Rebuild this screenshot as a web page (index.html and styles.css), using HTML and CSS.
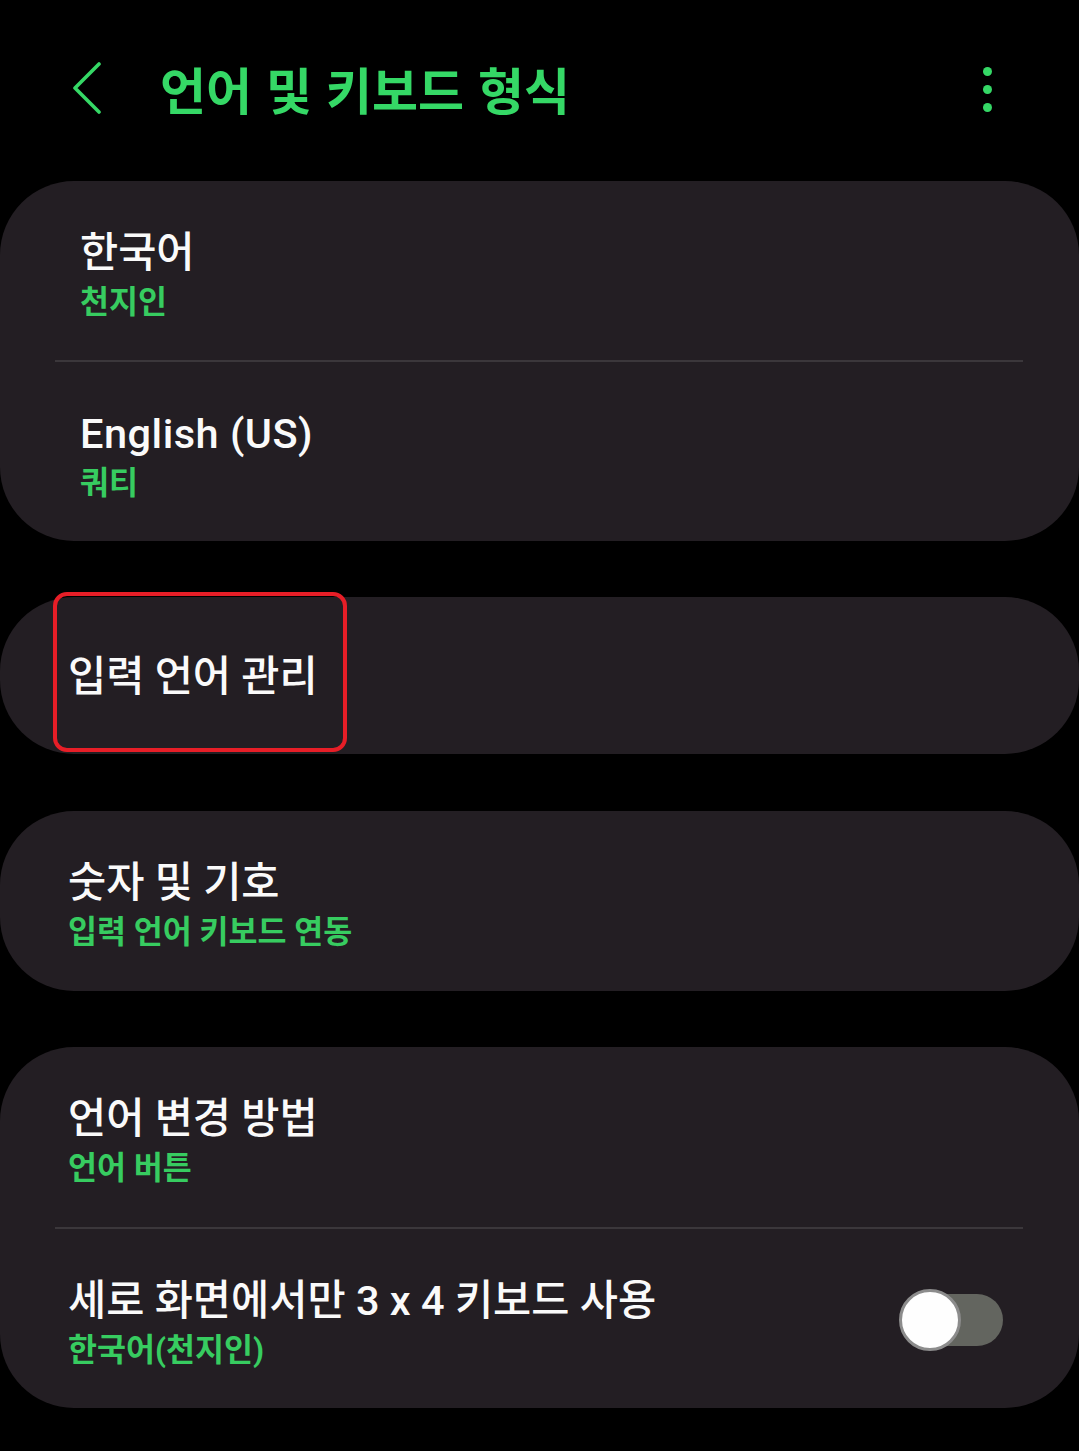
FILE: index.html
```html
<!DOCTYPE html>
<html lang="ko">
<head>
<meta charset="utf-8">
<title>언어 및 키보드 형식</title>
<link rel="stylesheet" href="styles.css">
</head>
<body>
<header class="appbar">
  <div class="back">
    <svg width="30" height="52" viewBox="0 0 30 52"><polyline points="27,2 3,26 27,50" fill="none" stroke="#35d866" stroke-width="3.6" stroke-linecap="round" stroke-linejoin="round"/></svg>
  </div>
  <h1 class="title">언어 및 키보드 형식</h1>
  <div class="more"><span></span><span></span><span></span></div>
</header>

<main class="list">
  <section class="card">
    <div class="row wide">
      <div class="row-title">한국어</div>
      <div class="row-sub">천지인</div>
    </div>
    <div class="divider"></div>
    <div class="row wide">
      <div class="row-title latin">English (US)</div>
      <div class="row-sub">쿼티</div>
    </div>
  </section>

  <section class="card short">
    <div class="row single">
      <div class="row-title">입력 언어 관리</div>
    </div>
    <div class="highlight"></div>
  </section>

  <section class="card">
    <div class="row tall">
      <div class="row-title">숫자 및 기호</div>
      <div class="row-sub">입력 언어 키보드 연동</div>
    </div>
  </section>

  <section class="card">
    <div class="row tall">
      <div class="row-title">언어 변경 방법</div>
      <div class="row-sub">언어 버튼</div>
    </div>
    <div class="divider"></div>
    <div class="row toggle-row">
      <div class="texts">
        <div class="row-title">세로 화면에서만 3 x 4 키보드 사용</div>
        <div class="row-sub">한국어(천지인)</div>
      </div>
      <div class="switch"><div class="track"></div><div class="thumb"></div></div>
    </div>
  </section>
</main>
</body>
</html>
```

FILE: styles.css
```css
html, body {
  margin: 0;
  padding: 0;
  background: #000;
}
body {
  width: 1079px;
  min-height: 1451px;
  font-family: Roboto, "Noto Sans CJK KR", sans-serif;
  color: #fff;
}
.appbar {
  height: 181px;
  display: flex;
  align-items: flex-start;
  box-sizing: border-box;
  padding-top: 62px;
}
.back {
  width: 30px;
  margin-left: 72px;
  height: 52px;
}
.title {
  margin: 0 0 0 58px;
  font-family: "Noto Sans CJK KR", sans-serif;
  font-size: 50px;
  font-weight: 700;
  color: #35d866;
  line-height: 52px;
  letter-spacing: 0;
}
.more {
  margin-left: auto;
  margin-right: 87px;
  display: flex;
  flex-direction: column;
  gap: 9px;
  padding-top: 5px;
}
.more span {
  width: 9px;
  height: 9px;
  border-radius: 50%;
  background: #35d866;
}
.list {
  display: flex;
  flex-direction: column;
  gap: 56px;
}
.card {
  position: relative;
  background: #231e23;
  border-radius: 74px;
}
.card.short {
  margin-bottom: 1px;
}
.row {
  height: 179px;
  box-sizing: border-box;
  padding-left: 68px;
  padding-top: 14px;
  display: flex;
  flex-direction: column;
  justify-content: center;
}
.row.tall {
  height: 180px;
}
.row.wide {
  padding-left: 80px;
}
.card.short .row {
  height: 157px;
  padding-top: 3px;
}
.row-title {
  font-size: 41.5px;
  font-weight: 500;
  line-height: 50px;
  color: #fafafa;
}
.row-title.latin {
  letter-spacing: 0.5px;
}
.row-sub {
  font-size: 31.5px;
  font-weight: 700;
  line-height: 50px;
  color: #37cc60;
}
.divider {
  height: 2px;
  margin: 0 56px 0 55px;
  background: #3b373b;
}
.toggle-row {
  flex-direction: row;
  align-items: center;
  justify-content: space-between;
  padding-right: 76px;
}
.texts {
  display: flex;
  flex-direction: column;
}
.switch {
  position: relative;
  width: 104px;
  height: 62px;
  margin-top: -12px;
}
.track {
  position: absolute;
  left: 10px;
  right: 0;
  top: 5px;
  height: 52px;
  border-radius: 26px;
  background: #63655f;
}
.thumb {
  position: absolute;
  left: 0;
  top: 0;
  width: 56px;
  height: 56px;
  border-radius: 50%;
  background: #fefefe;
  border: 3px solid #8c8c8c;
}
.highlight {
  position: absolute;
  left: 53px;
  top: -5px;
  width: 286px;
  height: 152px;
  border: 4px solid #e71e27;
  border-radius: 14px;
}
```
